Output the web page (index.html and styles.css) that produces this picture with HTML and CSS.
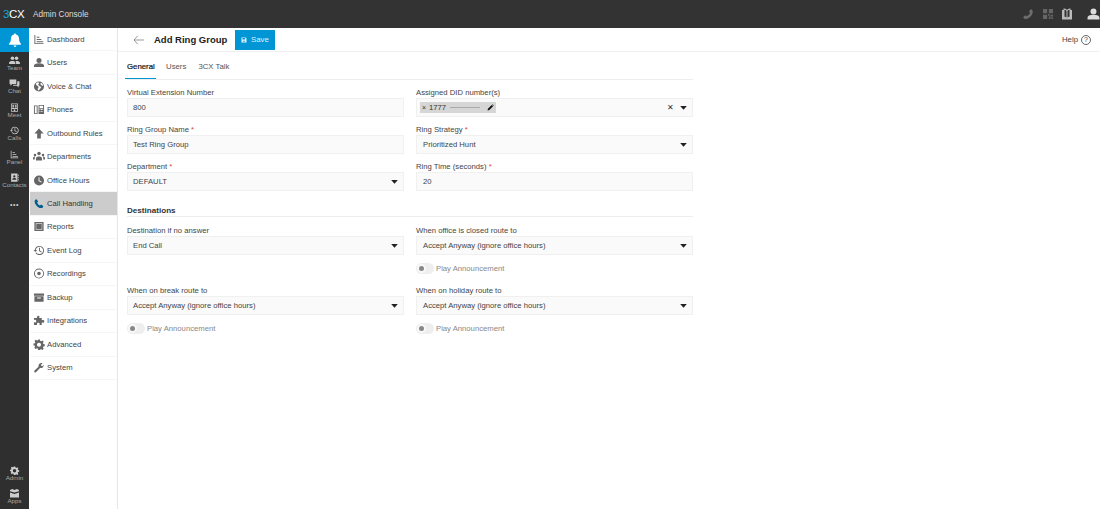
FILE: index.html
```html
<!DOCTYPE html>
<html lang="en">
<head>
<meta charset="utf-8">
<title>Add Ring Group</title>
<link rel="stylesheet" href="styles.css">
</head>
<body>
<svg class="defs" width="0" height="0" aria-hidden="true">
  <symbol id="i-phone" viewBox="0 0 24 24"><path d="M6.6 2.500l3.400 4.600-2 3c1 2.400 3.400 5 6 6.200l3-2 4.500 3.500c-.5 2.700-2.600 4.200-5 4.200C9.500 21.500 2.500 14.300 2.500 7c0-2.200 1.500-4 4.100-4.500z"/></symbol>
  <symbol id="i-user" viewBox="0 0 24 24"><circle cx="12" cy="7.500" r="5.500"/><path d="M1 22v-3c0-3.500 4-5.500 11-5.500s11 2 11 5.500v3z"/></symbol>
  <symbol id="i-gear" viewBox="0 0 24 24"><path fill-rule="evenodd" d="M10 1h4l.7 3.200 2 .8 2.800-1.700 2.800 2.800-1.700 2.800.8 2 3.100.7v4l-3.100.7-.8 2 1.700 2.800-2.800 2.800-2.800-1.700-2 .8L14 24h-4l-.7-3.200-2-.8-2.800 1.700-2.800-2.800 1.700-2.800-.8-2L0 14v-4l3.100-.7.8-2-1.700-2.800L5 1.700l2.800 1.700 2-.8zM12 8a4.500 4.500 0 1 0 0 9 4.500 4.500 0 0 0 0-9z"/></symbol>
  <symbol id="i-chart" viewBox="0 0 24 24"><path d="M2 2h2v18h18v2H2zM7 6h6v2H7zM7 11h10v2H7zM7 16h14v2H7z"/></symbol>
  <symbol id="i-history" viewBox="0 0 24 24"><path d="M13 2a10 10 0 1 1-8.500 15.300l1.800-1A8 8 0 1 0 5 11h3l-4 4.500L0 11h3a10 10 0 0 1 10-9zM12 6h2v6l4 2.500-1 1.700-5-3z"/></symbol>
  <symbol id="i-caret" viewBox="0 0 10 6"><path d="M0 0h10L5 5.500z"/></symbol>
</svg>

<header class="topbar">
  <div class="brand"><span class="logo"><span class="logo-3">3</span>CX</span><span class="console">Admin Console</span></div>
  <div class="top-icons">
    <svg class="ti ti-phone"><use href="#i-phone"/></svg>
    <svg class="ti ti-qr" viewBox="0 0 12 12"><path d="M0 0h5v5H0zM7 0h5v5H7zM0 7h5v5H0zM6 6h2v2H6zM9 7h3v2H9zM7 9h2v3H7zM10 10h2v2h-2z"/></svg>
    <svg class="ti ti-book" viewBox="0 0 24 24"><path d="M5 1c3 0 5.500 1 7 3 1.500-2 4-3 7-3v3h3v19H2V4h3zM7 3.500v14c2 .2 3.500.8 4 1.700V6C10.500 4.800 9 3.800 7 3.500zm10 0c-2 .3-3.500 1.300-4 2.500v13.200c.5-.9 2-1.500 4-1.700z"/></svg>
    <svg class="ti ti-user"><use href="#i-user"/></svg>
  </div>
</header>

<div class="shell">
  <nav class="rail">
    <a class="rail-bell"><svg viewBox="0 0 24 24"><path d="M12 1c1 0 1.700.7 1.700 1.700 3.500.8 5.300 3.600 5.300 7.300 0 4 .8 6 3 8v2H2v-2c2.200-2 3-4 3-8 0-3.700 1.800-6.500 5.300-7.300C10.300 1.700 11 1 12 1zM9.500 21.500h5a2.500 2.500 0 0 1-5 0z"/></svg></a>
    <a class="rail-item"><svg viewBox="0 0 24 20"><circle cx="7.500" cy="5" r="4"/><circle cx="16.500" cy="5" r="4"/><path d="M0 18v-3c0-2.500 3-4 7-4s7 1.500 7 4v3zM15.500 18v-3.500c0-1.200-.5-2.300-1.500-3.300 5-.7 10 .8 10 3.800v3z"/></svg><span>Team</span></a>
    <a class="rail-item"><svg viewBox="0 0 24 20"><path d="M1 1h15v10H7l-4 4v-4H1z"/><path d="M18 5h5v10h-2v4l-4-4H9v-2h9z"/></svg><span>Chat</span></a>
    <a class="rail-item"><svg viewBox="0 0 24 24"><path fill-rule="evenodd" d="M3 1h18v22H3zm2 2v18h14V3z"/><circle cx="8.500" cy="8" r="2.500"/><circle cx="15.500" cy="8" r="2.500"/><path d="M5 16c0-3 2-4 3.500-4s3.500 1 3.500 4zM12 16c0-3 2-4 3.500-4s3.500 1 3.500 4zM10 17h4v4h-4z"/></svg><span>Meet</span></a>
    <a class="rail-item"><svg><use href="#i-history"/></svg><span>Calls</span></a>
    <a class="rail-item"><svg><use href="#i-chart"/></svg><span>Panel</span></a>
    <a class="rail-item"><svg viewBox="0 0 24 24"><path fill-rule="evenodd" d="M3 1h17v22H3zm8.500 5a3 3 0 1 0 0 6 3 3 0 0 0 0-6zM6 18h11c0-3-2.500-4.500-5.500-4.500S6 15 6 18z"/><path d="M21 4h2v4h-2zM21 10h2v4h-2zM21 16h2v4h-2z"/></svg><span>Contacts</span></a>
    <a class="rail-more">•••</a>
    <div class="rail-spacer"></div>
    <a class="rail-item"><svg><use href="#i-gear"/></svg><span>Admin</span></a>
    <a class="rail-item"><svg viewBox="0 0 24 20"><path d="M2 2l5-2 5 2 5-2 5 2v3l-10 3L2 5zM2 8l10 3 10-3v11H2z"/></svg><span>Apps</span></a>
  </nav>

  <aside class="menu">
    <a class="menu-item"><svg><use href="#i-chart"/></svg>Dashboard</a>
    <a class="menu-item"><svg><use href="#i-user"/></svg>Users</a>
    <a class="menu-item"><svg viewBox="0 0 24 24"><path fill-rule="evenodd" d="M12 1a11 11 0 1 1 0 22 11 11 0 0 1 0-22zM5 6l2 4 3 1 1 4-2 2 1 4 4-3 3-5-4-2-3-3 2-2-1-3C9 2.500 7 4 5 6zm11-2l-1 3 3 3 3 1c0-3-2-6-5-7z"/></svg>Voice &amp; Chat</a>
    <a class="menu-item"><svg viewBox="0 0 24 24"><path fill-rule="evenodd" d="M1 3h8v19H1zm2 2v15h4V5zM11 2h12v20H11zm2 2v5h8V4zm0 7v2h2v-2zm3.500 0v2h2v-2zm3 0v2H21v-2zM13 15v2h2v-2zm3.500 0v2h2v-2zm3 0v2H21v-2z"/></svg>Phones</a>
    <a class="menu-item"><svg viewBox="0 0 24 24"><path d="M12 1l10 11h-6v11H8V12H2z"/></svg>Outbound Rules</a>
    <a class="menu-item"><svg viewBox="0 0 24 20"><circle cx="12" cy="4" r="3.500"/><circle cx="4" cy="7" r="2.500"/><circle cx="20" cy="7" r="2.500"/><path d="M6 18v-4c0-3 3-4 6-4s6 1 6 4v4zM0 16v-3c0-2 2-3 4.500-3-.7 1-1 2-1 3.500V16zM24 16v-3c0-2-2-3-4.500-3 .7 1 1 2 1 3.500V16z"/></svg>Departments</a>
    <a class="menu-item"><svg viewBox="0 0 24 24"><path fill-rule="evenodd" d="M12 1a11 11 0 1 1 0 22 11 11 0 0 1 0-22zm-1 4v8l6 3.500 1-1.800-5-2.900V5z"/></svg>Office Hours</a>
    <a class="menu-item is-active"><svg><use href="#i-phone"/></svg>Call Handling</a>
    <a class="menu-item"><svg viewBox="0 0 24 24"><path fill-rule="evenodd" d="M2 2h20v20H2zm3 3v14h14V5z"/><path d="M6 6h12v12H6z"/></svg>Reports</a>
    <a class="menu-item"><svg><use href="#i-history"/></svg>Event Log</a>
    <a class="menu-item"><svg viewBox="0 0 24 24"><path fill-rule="evenodd" d="M12 1a11 11 0 1 1 0 22 11 11 0 0 1 0-22zm0 2a9 9 0 1 0 0 18 9 9 0 0 0 0-18zm0 5a4 4 0 1 1 0 8 4 4 0 0 1 0-8z"/></svg>Recordings</a>
    <a class="menu-item"><svg viewBox="0 0 24 24"><path fill-rule="evenodd" d="M1 3h22v5H1zM2 9h20v12H2zm6 3v2h8v-2z"/></svg>Backup</a>
    <a class="menu-item"><svg viewBox="0 0 24 24"><path d="M9 2c2-1 4 0 4 2 0 1-.5 1.500-.5 2.500H18v5c1 0 1.500-.5 2.500-.5 2 0 3 1.500 3 3s-1 3-3 3c-1 0-1.500-.5-2.500-.5V22h-5c0-1 .5-1.500.5-2.500 0-1.500-1.500-2.500-3-2.500s-3 1-3 2.500c0 1 .5 1.500.5 2.500H1v-6c1 0 1.500.5 2.500.5 1.500 0 2.500-1.500 2.500-3s-1-3-2.500-3c-1 0-1.500.5-2.500.5V6.500h6.500C7.500 5.500 7 4 9 2z"/></svg>Integrations</a>
    <a class="menu-item"><svg><use href="#i-gear"/></svg>Advanced</a>
    <a class="menu-item"><svg viewBox="0 0 24 24"><path d="M22 6c.8 3-1 7-5 7-1 0-1.800-.2-2.300-.5L6 22c-1.500 1.300-3.200 1-4-.3-.8-1-.6-2.400.3-3.200l8.700-8C10.500 7 12 2 18 2c.8 0 1.500.2 2 .4L16 6.500l1.500 2 2 .5z"/></svg>System</a>
  </aside>

  <main class="main">
    <div class="page-head">
      <svg class="back" viewBox="0 0 14 12"><path d="M5.500 1L1 6l4.500 5M1 6h12"/></svg>
      <h1>Add Ring Group</h1>
      <button class="save"><svg viewBox="0 0 12 12"><path fill-rule="evenodd" d="M1 1h8l2 2v8H1zm2 1v3h5V2zm3 5a1.500 1.500 0 1 0 0 3 1.500 1.500 0 0 0 0-3z"/></svg>Save</button>
      <div class="help">Help <span class="help-q">?</span></div>
    </div>
    <div class="content">
      <div class="tabs">
        <a class="tab is-on">General</a>
        <a class="tab">Users</a>
        <a class="tab">3CX Talk</a>
      </div>
      <div class="form-grid">
        <div class="field"><label>Virtual Extension Number</label><div class="input">800</div></div>
        <div class="field"><label>Assigned DID number(s)</label>
          <div class="input">
            <span class="chip"><span class="chip-x">×</span><span class="chip-num">1777</span><span class="chip-blur"></span><svg viewBox="0 0 12 12"><path d="M1 11l.6-3L8 1.600 10.400 4 4 10.400zM8.800 1l.8-.5 2 2-.5.800z"/></svg></span>
            <span class="clear">✕</span><svg class="caret"><use href="#i-caret"/></svg>
          </div>
        </div>
        <div class="field"><label>Ring Group Name <em>*</em></label><div class="input">Test Ring Group</div></div>
        <div class="field"><label>Ring Strategy <em>*</em></label><div class="input">Prioritized Hunt<svg class="caret"><use href="#i-caret"/></svg></div></div>
        <div class="field"><label>Department <em>*</em></label><div class="input">DEFAULT<svg class="caret"><use href="#i-caret"/></svg></div></div>
        <div class="field"><label>Ring Time (seconds) <em>*</em></label><div class="input">20</div></div>
      </div>
      <h2>Destinations</h2>
      <div class="form-grid dest">
        <div class="field"><label>Destination if no answer</label><div class="input">End Call<svg class="caret"><use href="#i-caret"/></svg></div></div>
        <div class="field"><label>When office is closed route to</label><div class="input">Accept Anyway (ignore office hours)<svg class="caret"><use href="#i-caret"/></svg></div>
          <div class="toggle"><span class="switch"></span>Play Announcement</div></div>
        <div class="field"><label>When on break route to</label><div class="input">Accept Anyway (ignore office hours)<svg class="caret"><use href="#i-caret"/></svg></div>
          <div class="toggle"><span class="switch"></span>Play Announcement</div></div>
        <div class="field"><label>When on holiday route to</label><div class="input">Accept Anyway (ignore office hours)<svg class="caret"><use href="#i-caret"/></svg></div>
          <div class="toggle"><span class="switch"></span>Play Announcement</div></div>
      </div>
    </div>
  </main>
</div>
</body>
</html>
```

FILE: styles.css
```css
* { box-sizing: border-box; }
html, body { margin: 0; height: 100%; overflow: hidden; }
body { font-family: "Liberation Sans", Arial, sans-serif; font-size: 7.700px; color: #333; background: #fff; display: flex; flex-direction: column; }
.defs { position: absolute; }
svg { fill: currentColor; display: block; }
a { display: block; }

.topbar { height: 28px; flex: none; background: #333; display: flex; align-items: center; justify-content: space-between; color: #e8e8e8; }
.brand { display: flex; align-items: center; padding-left: 3px; }
.logo { font-size: 11.500px; font-weight: 400; color: #fff; letter-spacing: -.3px; width: 30px; }
.logo-3 { color: #10a5e0; }
.console { font-size: 8.200px; color: #ddd; }
.top-icons { display: flex; align-items: center; gap: 8px; }
.ti { width: 12px; height: 12px; color: #6d6d6d; }
.ti-phone { transform: scaleX(-1); }
.ti-qr { width: 10px; height: 10px; color: #666; margin-left: 1px; }
.ti-book { width: 12px; height: 12px; color: #bbb; }
.ti-user { width: 13px; height: 16px; color: #ddd; margin-left: 6px; }

.shell { flex: 1; display: flex; min-height: 0; }

.rail { width: 29px; flex: none; background: #2f2f2f; display: flex; flex-direction: column; color: #bdbdbd; }
.rail-bell { height: 24px; flex: none; background: #0096d6; color: #fff; display: flex; align-items: center; justify-content: center; }
.rail-bell svg { width: 14px; height: 14px; }
.rail-item { height: 23.500px; flex: none; display: flex; flex-direction: column; align-items: center; justify-content: center; padding-bottom: 1px; font-size: 6.200px; line-height: 6px; color: #aaa; }
.rail-item svg { width: 11px; height: 9px; color: #ccc; }
.rail-more { height: 16px; margin-top: 4px; text-align: center; font-size: 7px; line-height: 16px; letter-spacing: .6px; color: #ccc; }
.rail-spacer { flex: 1; }

.menu { width: 89px; flex: none; border-right: 1px solid #e6e6e6; background: #fff; display: flex; flex-direction: column; }
.menu-item { height: 23.480px; flex: none; display: flex; align-items: center; gap: 2px; margin-left: 1px; padding-left: 3px; font-size: 7.700px; color: #444; border-bottom: 1px solid #f6f6f6; }
.menu-item svg { width: 12px; height: 11px; color: #666; flex: none; }
.menu-item.is-active { background: #ccc; color: #333; }
.menu-item.is-active svg { color: #005d8f; }

.main { flex: 1; min-width: 0; display: flex; flex-direction: column; }
.page-head { height: 24px; flex: none; display: flex; align-items: center; border-bottom: 1px solid #f0f0f0; padding-left: 15px; padding-right: 9px; }
.back { width: 12px; height: 10px; fill: none; stroke: #888; stroke-width: 1; }
h1 { margin: 0 0 0 9px; font-size: 9.500px; font-weight: 700; color: #222; width: 81px; white-space: nowrap; }
.save { width: 40px; height: 20px; border: 0; padding: 0 0 0 6px; background: #0096d6; color: #dff3fc; font: 7.800px "Liberation Sans", Arial, sans-serif; display: flex; align-items: center; gap: 4px; }
.save svg { width: 6px; height: 6px; }
.help { margin-left: auto; display: flex; align-items: center; gap: 3px; font-size: 7.800px; color: #444; }
.help-q { width: 10px; height: 10px; border: 1px solid #666; border-radius: 50%; font-size: 7px; line-height: 8px; text-align: center; }

.content { width: 575px; padding-left: 9px; }
.tabs { height: 28px; display: flex; align-items: flex-end; border-bottom: 1px solid #eee; }
.tab { height: 21px; margin-right: 12px; font-size: 7.800px; line-height: 18px; color: #555; }
.tab.is-on { color: #111; border-bottom: 1px solid #0096d6; width: 31px; margin: 0 10px 0 -2px; padding-left: 2px; -webkit-text-stroke: .2px #111; }

.form-grid { display: grid; grid-template-columns: 277px 277px; column-gap: 12px; padding-top: 7px; }
.field { display: flex; flex-direction: column; min-height: 37px; }
.field label { height: 11px; line-height: 11px; font-size: 7.700px; color: #444; }
.field em { font-style: normal; color: #e04040; }
.input { height: 19px; flex: none; background: #fafafa; border: 1px solid #f0f0f0; padding: 0 5px 0 5px; display: flex; align-items: center; font-size: 7.700px; color: #444; }
.field:nth-child(even) .input { padding-left: 6px; }
.caret { width: 7px; height: 4px; margin-left: auto; color: #222; }
.chip { height: 11px; width: 76px; margin-left: -3px; background: #d6d6d6; display: flex; align-items: center; padding-left: 2px; color: #333; }
.chip-x { font-size: 7px; width: 7px; }
.chip-num { width: 21px; }
.chip-blur { width: 30px; height: 1px; background: #aaa; margin-right: 4px; }
.chip svg { width: 7px; height: 7px; margin-left: 3px; color: #111; }
.clear { margin-left: auto; font-size: 8px; color: #333; margin-right: 6px; }
.clear + .caret { margin-left: 0; }

h2 { margin: 7px 0 0; height: 12px; font-size: 8.100px; line-height: 11px; font-weight: 700; color: #333; border-bottom: 1px solid #eee; }
.dest { padding-top: 8px; }
.dest .field { min-height: 60px; }
.toggle { display: flex; align-items: center; gap: 2px; height: 11px; margin-top: 7.500px; color: #888; font-size: 7.700px; }
.switch { width: 18px; height: 11px; border-radius: 6px; background: #eee; position: relative; }
.switch::before { content: ""; position: absolute; left: 3px; top: 3px; width: 5px; height: 5px; border-radius: 50%; background: #888; box-shadow: 0 0 0 2px #f8f8f8; }
```
